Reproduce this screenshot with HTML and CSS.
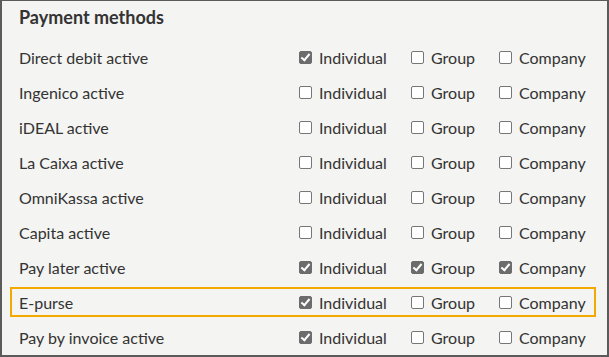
FILE: index.html
```html
<!DOCTYPE html>
<html lang="en">
<head>
    <meta charset="UTF-8">
    <title>Payment methods</title>
    <link rel="stylesheet" href="styles.css">
</head>
<body>
    <div class="panel">
        <h2 class="panel-title">Payment methods</h2>

        <div class="method-list">
            <div class="method-row">
                <span class="method-name">Direct debit active</span>
                <label class="option"><input type="checkbox" checked> Individual</label>
                <label class="option"><input type="checkbox"> Group</label>
                <label class="option"><input type="checkbox"> Company</label>
            </div>
            <div class="method-row">
                <span class="method-name">Ingenico active</span>
                <label class="option"><input type="checkbox"> Individual</label>
                <label class="option"><input type="checkbox"> Group</label>
                <label class="option"><input type="checkbox"> Company</label>
            </div>
            <div class="method-row">
                <span class="method-name">iDEAL active</span>
                <label class="option"><input type="checkbox"> Individual</label>
                <label class="option"><input type="checkbox"> Group</label>
                <label class="option"><input type="checkbox"> Company</label>
            </div>
            <div class="method-row">
                <span class="method-name">La Caixa active</span>
                <label class="option"><input type="checkbox"> Individual</label>
                <label class="option"><input type="checkbox"> Group</label>
                <label class="option"><input type="checkbox"> Company</label>
            </div>
            <div class="method-row">
                <span class="method-name">OmniKassa active</span>
                <label class="option"><input type="checkbox"> Individual</label>
                <label class="option"><input type="checkbox"> Group</label>
                <label class="option"><input type="checkbox"> Company</label>
            </div>
            <div class="method-row">
                <span class="method-name">Capita active</span>
                <label class="option"><input type="checkbox"> Individual</label>
                <label class="option"><input type="checkbox"> Group</label>
                <label class="option"><input type="checkbox"> Company</label>
            </div>
            <div class="method-row">
                <span class="method-name">Pay later active</span>
                <label class="option"><input type="checkbox" checked> Individual</label>
                <label class="option"><input type="checkbox" checked> Group</label>
                <label class="option"><input type="checkbox" checked> Company</label>
            </div>
            <div class="method-row highlighted">
                <span class="method-name">E-purse</span>
                <label class="option"><input type="checkbox" checked> Individual</label>
                <label class="option"><input type="checkbox"> Group</label>
                <label class="option"><input type="checkbox"> Company</label>
            </div>
            <div class="method-row">
                <span class="method-name">Pay by invoice active</span>
                <label class="option"><input type="checkbox" checked> Individual</label>
                <label class="option"><input type="checkbox"> Group</label>
                <label class="option"><input type="checkbox"> Company</label>
            </div>
        </div>
    </div>
</body>
</html>
```

FILE: styles.css
```css
html, body {
    margin: 0;
    padding: 0;
}

body {
    font-family: Lato, "Noto Sans", sans-serif;
    background-color: #f4f4f2;
    color: #333;
}

.panel {
    box-sizing: border-box;
    height: 357px;
    border: 2px solid #5b5b5b;
    border-top-width: 1px;
    padding: 0 11px 0 8px;
}

.panel-title {
    margin: 0;
    padding: 5px 0 0 9px;
    height: 41px;
    box-sizing: border-box;
    font-size: 18px;
    font-weight: bold;
    color: #333;
}

.method-list {
    display: flex;
    flex-direction: column;
    gap: 5px;
}

.method-row {
    box-sizing: border-box;
    height: 30px;
    border: 2px solid transparent;
    display: grid;
    grid-template-columns: 287px 112px 88px 1fr;
    align-items: center;
    font-size: 16px;
}

.method-row.highlighted {
    border-color: #f5a800;
}

.method-name {
    padding-left: 7px;
}

.option {
    display: flex;
    align-items: center;
    gap: 7px;
}

.option input {
    appearance: none;
    box-sizing: border-box;
    width: 13px;
    height: 13px;
    margin: 0;
    border: 1px solid #767676;
    border-radius: 2px;
    background-color: #fff;
    position: relative;
}

.option input:checked {
    background-color: #6c6c6c;
    border-color: #6c6c6c;
}

.option input:checked::after {
    content: "";
    position: absolute;
    left: 3px;
    top: 0px;
    width: 3px;
    height: 7px;
    border: solid #fff;
    border-width: 0 2px 2px 0;
    transform: rotate(40deg);
}
```
